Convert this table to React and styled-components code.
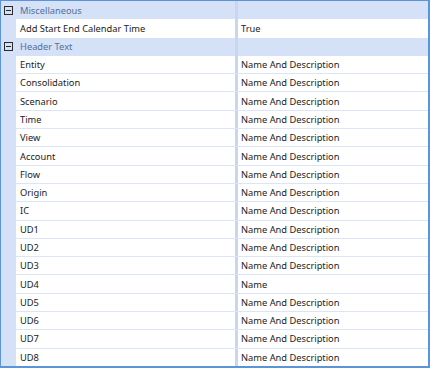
import React from "react";
import styled, { createGlobalStyle } from "styled-components";

const Global = createGlobalStyle`
  html, body { margin: 0; padding: 0; background: #ffffff; }
  #root { width: 430px; height: 368px; }
`;

const Grid = styled.div`
  box-sizing: border-box;
  width: 430px;
  height: 368px;
  border-style: solid;
  border-color: #5b95d6;
  border-width: 1px 2px 2px 1px;
  background: #d5e1f6;
  display: flex;
  flex-direction: column;
  font-family: "Noto Sans", "Open Sans", sans-serif;
  font-size: 9.3px;
  overflow: hidden;
`;

const CategoryRow = styled.div`
  display: flex;
  align-items: center;
  height: 18.3px;
  flex: none;
  color: #52709a;
`;

const Toggle = styled.span`
  width: 15px;
  display: flex;
  justify-content: center;
  align-items: center;
  flex: none;
`;

const Box = styled.span`
  box-sizing: border-box;
  width: 9px;
  height: 9px;
  border: 1px solid #2b2b2b;
  position: relative;
  &::after {
    content: "";
    position: absolute;
    left: 1px;
    right: 1px;
    top: 3px;
    height: 1px;
    background: #2b2b2b;
  }
`;

const CategoryLabel = styled.span`
  padding-left: 4px;
  white-space: nowrap;
`;

const PropRow = styled.div`
  display: flex;
  height: 18.3px;
  flex: none;
  box-sizing: border-box;
  padding-left: 15px;
`;

const Cells = styled.div`
  flex: 1;
  display: flex;
  background: #ffffff;
  box-sizing: border-box;
  border-bottom: ${(p) => (p.$last ? "none" : "1px solid #dbe5f5")};
`;

const NameCell = styled.div`
  width: 219px;
  flex: none;
  padding-left: 4px;
  display: flex;
  align-items: center;
  color: #222222;
  white-space: nowrap;
  box-sizing: border-box;
`;

const Splitter = styled.div`
  width: 3px;
  flex: none;
  background: #c8d6ef;
`;

const ValueCell = styled.div`
  flex: 1;
  padding-left: 3px;
  display: flex;
  align-items: center;
  color: #222222;
  white-space: nowrap;
`;

const Filler = styled.div`
  flex: 1;
`;

const CatSplit = styled.div`
  width: 3px;
  align-self: stretch;
  background: #c8d6ef;
  margin-left: auto;
`;

const CatRest = styled.div`
  width: 190px;
  flex: none;
`;

const sections = [
  {
    title: "Miscellaneous",
    rows: [["Add Start End Calendar Time", "True"]],
  },
  {
    title: "Header Text",
    rows: [
      ["Entity", "Name And Description"],
      ["Consolidation", "Name And Description"],
      ["Scenario", "Name And Description"],
      ["Time", "Name And Description"],
      ["View", "Name And Description"],
      ["Account", "Name And Description"],
      ["Flow", "Name And Description"],
      ["Origin", "Name And Description"],
      ["IC", "Name And Description"],
      ["UD1", "Name And Description"],
      ["UD2", "Name And Description"],
      ["UD3", "Name And Description"],
      ["UD4", "Name"],
      ["UD5", "Name And Description"],
      ["UD6", "Name And Description"],
      ["UD7", "Name And Description"],
      ["UD8", "Name And Description"],
    ],
  },
];

export default function App() {
  return (
    <>
      <Global />
      <Grid>
        {sections.map((s) => (
          <React.Fragment key={s.title}>
            <CategoryRow>
              <Toggle>
                <Box />
              </Toggle>
              <CategoryLabel>{s.title}</CategoryLabel>
              <CatSplit />
              <CatRest />
            </CategoryRow>
            {s.rows.map(([n, v], i) => (
              <PropRow key={n}>
                <Cells $last={i === s.rows.length - 1}>
                  <NameCell>{n}</NameCell>
                  <Splitter />
                  <ValueCell>{v}</ValueCell>
                </Cells>
              </PropRow>
            ))}
          </React.Fragment>
        ))}
        <Filler />
      </Grid>
    </>
  );
}
